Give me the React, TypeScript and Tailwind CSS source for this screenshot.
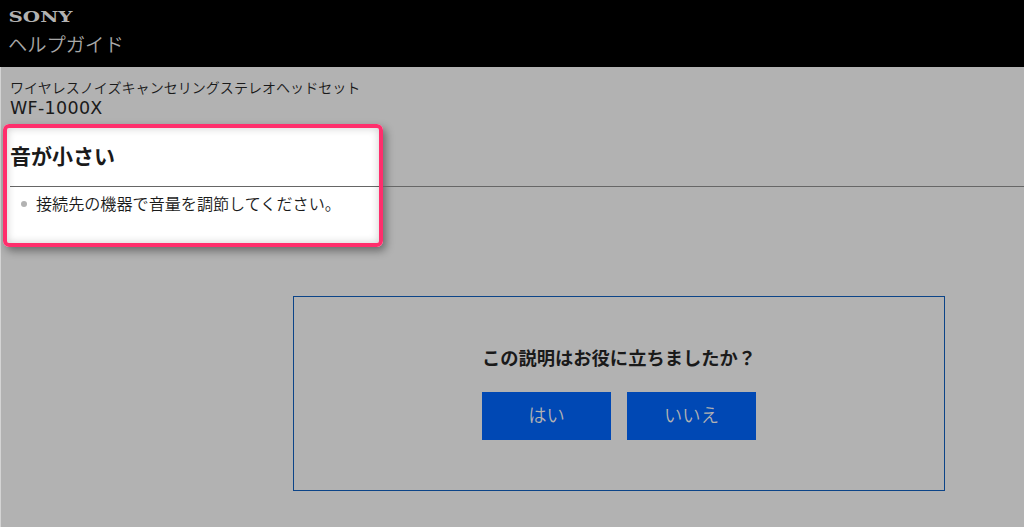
function SonyLogo() {
  return (
    <svg className="block h-[20px] w-[70px]" viewBox="0 0 70 20" role="img" aria-label="SONY">
      <text
        x="0.5"
        y="15"
        textLength="64"
        lengthAdjust="spacingAndGlyphs"
        fill="#b2b2b2"
        fontFamily="DejaVu Serif, serif"
        fontSize="15"
        fontWeight="700"
      >
        SONY
      </text>
    </svg>
  );
}

function Header() {
  return (
    <header className="h-[67px] bg-black pt-[7px] pl-[8px]">
      <SonyLogo />
      <p className="mt-[3px] text-[19.3px] leading-[28px] text-[#a8a8a8]">ヘルプガイド</p>
    </header>
  );
}

/** Article title and answer, framed by the pink highlight */
function Article() {
  return (
    <section className="relative h-[120px]">
      <div className="absolute -top-px left-[2px] h-[123px] w-[380px] rounded-[6px] bg-white shadow-[3px_4px_8px_rgba(0,0,0,0.4)]" />
      <div className="relative pl-[9px]">
        <h1 className="h-[62px] border-b border-[#666] pt-[15px] text-[21px] leading-[30px] font-bold text-[#1a1a1a]">
          音が小さい
        </h1>
        <ul className="pt-[3px] pl-[11px]">
          <li className="flex items-center gap-[9px] text-[16.1px] leading-[26px] text-[#1a1a1a]">
            <span className="mt-[2px] size-[6px] rounded-full bg-[#b2b2b2]" />
            接続先の機器で音量を調節してください。
          </li>
        </ul>
      </div>
      <div className="absolute -top-px left-[2px] h-[123px] w-[380px] rounded-[6px] border-4 border-[#ff2e6c] shadow-[inset_0_0_8px_rgba(0,0,0,0.2)]" />
    </section>
  );
}

function Feedback() {
  return (
    <section className="mt-[51px] ml-[292px] h-[195px] w-[652px] border border-[#0c4488] pt-[46px] text-center">
      <h2 className="text-[18.3px] leading-[28px] font-bold text-[#1a1a1a]">この説明はお役に立ちましたか？</h2>
      <div className="mt-[21px] flex justify-center gap-4">
        <button className="h-12 w-[129px] bg-[#0048b4] pb-[3px] text-[18.3px] text-[#b2b2b2]">はい</button>
        <button className="h-12 w-[129px] bg-[#0048b4] pb-[3px] text-[18.3px] text-[#b2b2b2]">いいえ</button>
      </div>
    </section>
  );
}

export default function App() {
  return (
    <div className="h-[527px] overflow-hidden bg-[#b2b2b2] font-['Noto_Sans_CJK_JP',sans-serif] font-[350]">
      <Header />
      <main className="h-[460px] border-l border-[#d4d4d4] text-[#1a1a1a]">
        <div className="h-[58px] pt-[10px] pl-[9px]">
          <p className="text-[14.05px] leading-[21px]">ワイヤレスノイズキャンセリングステレオヘッドセット</p>
          <p className="font-['DejaVu_Sans',sans-serif] text-[17.5px] leading-[21px] font-normal tracking-[0.3px]">
            WF-1000X
          </p>
        </div>
        <Article />
        <Feedback />
      </main>
    </div>
  );
}
